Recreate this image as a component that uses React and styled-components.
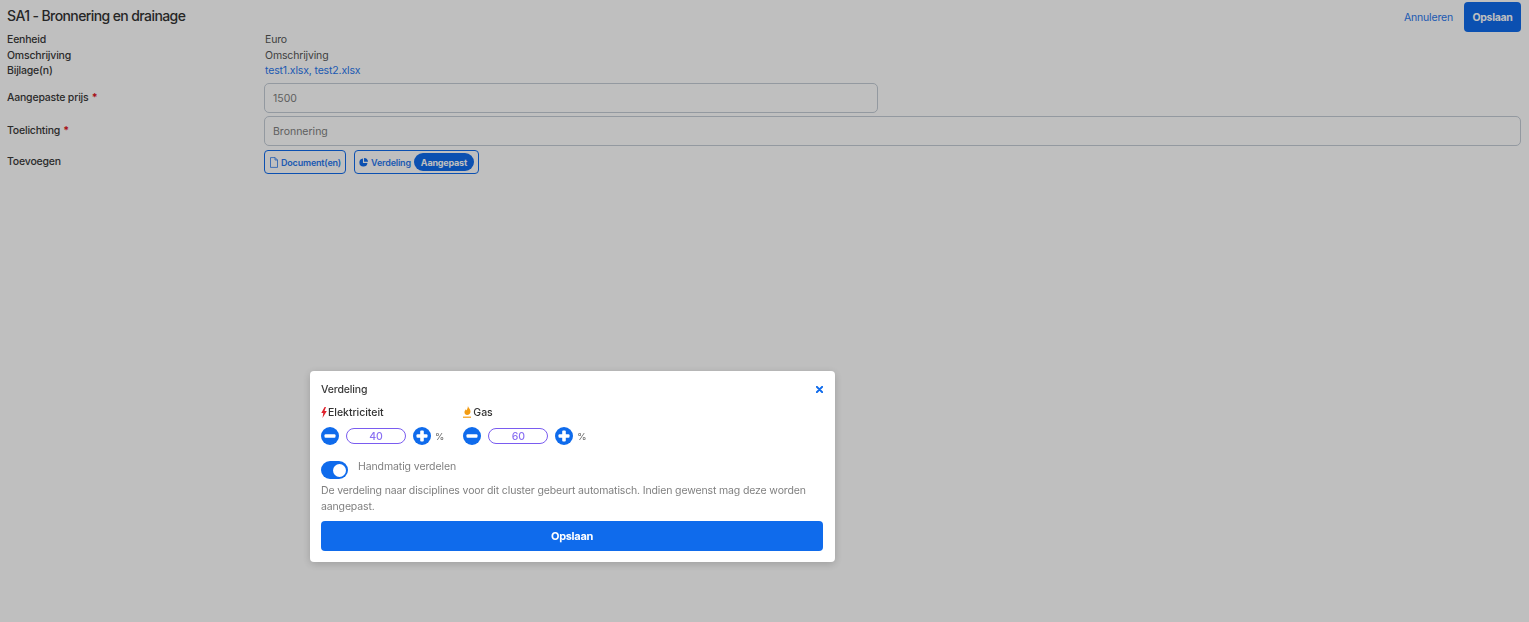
import React from "react";
import styled, { createGlobalStyle } from "styled-components";

const Global = createGlobalStyle`
  html, body { margin: 0; padding: 0; background: #fff; }
  body { font-family: Inter, "Noto Sans", sans-serif; color: #333; overflow: hidden; }
  * { box-sizing: border-box; }
`;

const Page = styled.div`
  width: 1529px;
  height: 622px;
  padding: 2px 8px 0 7px;
`;
const Header = styled.header`
  display: flex;
  align-items: center;
  justify-content: space-between;
  height: 30px;
`;
const Title = styled.h1`
  margin: 0 0 3px;
  font-size: 14px;
  font-weight: 500;
  letter-spacing: -0.6px;
  color: #333;
`;
const HeaderActions = styled.div`
  display: flex;
  align-items: center;
  gap: 11px;
`;
const LinkButton = styled.a`
  font-size: 10.5px;
  letter-spacing: -0.17px;
  color: #2a78ee;
`;
const SmallPrimary = styled.button`
  width: 57px;
  height: 30px;
  border: 0;
  border-radius: 4px;
  background: #0f6bec;
  color: #fff;
  font: 700 10.5px Inter, sans-serif;
  letter-spacing: -0.3px;
  padding: 0;
`;
const InfoList = styled.div`
  display: grid;
  grid-template-columns: 258px 1fr;
  grid-template-rows: 15px 16px 15px;
  align-items: center;
  margin-bottom: 5px;
`;
const InfoLabel = styled.div`
  font-size: 10.5px;
  font-weight: 500;
  letter-spacing: -0.2px;
  color: #3a3a3a;
`;
const InfoValue = styled.div`
  font-size: 10.5px;
  letter-spacing: -0.15px;
  color: ${(p) => (p.$link ? "#2a78ee" : "#555")};
`;
const FormRow = styled.div`
  display: grid;
  grid-template-columns: 257px 1fr;
  margin-bottom: 3px;
`;
const FieldLabel = styled.div`
  font-size: 10.5px;
  font-weight: 500;
  letter-spacing: -0.2px;
  color: #3a3a3a;
  padding-top: ${(p) => p.$top || 8}px;
`;
const Req = styled.span`
  color: #e0141e;
  font-weight: 700;
  margin-left: 1px;
`;
const Field = styled.div`
  height: 30px;
  width: ${(p) => p.$width || "100%"};
  border: 1px solid #c4ccd6;
  border-radius: 5px;
  padding: 1px 8px 0;
  display: flex;
  align-items: center;
  font-size: 10.5px;
  color: #808080;
  background: #fff;
`;
const AddRow = styled.div`
  display: flex;
  gap: 8px;
  padding-top: 1px;
`;
const AddButton = styled.div`
  height: 24px;
  display: flex;
  align-items: center;
  gap: ${(p) => p.$gap}px;
  padding: 0 4px;
  border: 1px solid #0f6bec;
  border-radius: 4px;
  font-size: 9px;
  font-weight: 600;
  letter-spacing: -0.19px;
  color: #2a78ee;
`;
const Pill = styled.span`
  height: 18px;
  padding: 0 7px;
  display: flex;
  align-items: center;
  border-radius: 9px;
  background: #0f6bec;
  color: #fff;
  font-weight: 700;
`;
const Overlay = styled.div`
  position: fixed;
  inset: 0;
  background: rgba(0, 0, 0, 0.25);
`;
const Modal = styled.section`
  position: fixed;
  left: 310px;
  top: 371px;
  width: 525px;
  height: 191px;
  background: #fff;
  border-radius: 4px;
  box-shadow: 0 2px 8px rgba(0, 0, 0, 0.18);
  padding: 12px 12px 11px 11px;
  display: flex;
  flex-direction: column;
`;
const ModalHead = styled.div`
  display: flex;
  align-items: center;
  justify-content: space-between;
  font-size: 10.5px;
  font-weight: 500;
  letter-spacing: -0.15px;
  color: #3a3a3a;
  height: 13px;
`;
const Disciplines = styled.div`
  display: flex;
  gap: 19px;
  margin-top: 9px;
`;
const Discipline = styled.div`
  display: flex;
  flex-direction: column;
  gap: 8px;
`;
const DisciplineName = styled.div`
  display: flex;
  align-items: center;
  gap: 1px;
  height: 14px;
  font-size: 10.5px;
  font-weight: 500;
  letter-spacing: -0.03px;
  color: #333;
`;
const Stepper = styled.div`
  display: flex;
  align-items: center;
  height: 18px;
`;
const RoundBtn = styled.span`
  display: block;
  width: 18px;
  height: 18px;
`;
const Amount = styled.div`
  width: 60px;
  height: 16px;
  margin: 0 7px;
  border: 1px solid #7a5cf0;
  border-radius: 8px;
  display: flex;
  align-items: center;
  justify-content: center;
  font-size: 10.5px;
  font-weight: 500;
  color: #8a70f2;
`;
const Percent = styled.span`
  margin-left: 4px;
  font-size: 9.5px;
  color: #666;
`;
const ToggleRow = styled.div`
  display: flex;
  align-items: flex-start;
  gap: 10px;
  margin-top: 16px;
  height: 18px;
`;
const Toggle = styled.div`
  width: 27px;
  height: 18px;
  border-radius: 9px;
  background: #0f6bec;
  position: relative;
`;
const Knob = styled.span`
  position: absolute;
  right: 2px;
  top: 2.5px;
  width: 13px;
  height: 13px;
  border-radius: 50%;
  background: #fff;
`;
const ToggleLabel = styled.span`
  margin-top: -1px;
  font-size: 10.5px;
  letter-spacing: -0.1px;
  color: #808080;
`;
const Help = styled.p`
  margin: 4px 0 0;
  font-size: 10.5px;
  line-height: 16px;
  letter-spacing: -0.14px;
  color: #808080;
`;
const SaveBtn = styled.button`
  margin-top: 6px;
  height: 30px;
  width: 100%;
  flex: none;
  border: 0;
  border-radius: 4px;
  background: #0f6bec;
  color: #fff;
  font: 700 11px Inter, sans-serif;
  letter-spacing: -0.3px;
`;

const Minus = () => (
  <RoundBtn as="svg" viewBox="0 0 18 18">
    <circle cx="9" cy="9" r="9" fill="#0f6bec" />
    <rect x="3.5" y="7.2" width="11" height="3.6" rx="1" fill="#fff" />
  </RoundBtn>
);
const Plus = () => (
  <RoundBtn as="svg" viewBox="0 0 18 18">
    <circle cx="9" cy="9" r="9" fill="#0f6bec" />
    <rect x="3.5" y="7.2" width="11" height="3.6" rx="1" fill="#fff" />
    <rect x="7.2" y="3.5" width="3.6" height="11" rx="1" fill="#fff" />
  </RoundBtn>
);
const Bolt = () => (
  <svg width="6" height="11" viewBox="0 0 6 11">
    <path d="M3.6 0 .3 6h2L1.5 11 5.8 4H3.5L5 0Z" fill="#e0222c" />
  </svg>
);
const Flame = () => (
  <svg width="9" height="12" viewBox="0 0 9 12">
    <path d="M4.9 0c.4 1.700 2.600 3 2.600 5.600C7.500 7.600 6 9 4.200 9S1.200 7.700 1.500 5.800c.2-1 .9-1.500 1.200-2.500.4.300.6.700.7 1.100C4.300 3.200 5 1.500 4.900 0Z" fill="#f39c12" />
    <rect x="0" y="10.6" width="8" height="1.2" fill="#f39c12" />
  </svg>
);
const DocIcon = () => (
  <svg width="10" height="11" viewBox="0 0 10 11" fill="none" stroke="#2a78ee" strokeWidth="0.8">
    <path d="M1.500.6h4.600L8.500 3v7.400h-7Z" />
    <path d="M6 .6V3h2.500" />
  </svg>
);
const PieIcon = () => (
  <svg width="9" height="9" viewBox="0 0 10 10">
    <path d="M4.400.6a4.500 4.500 0 1 0 5 5H4.400Z" fill="#0f6bec" />
    <path d="M5.600 0v4.300H10A4.500 4.500 0 0 0 5.600 0Z" fill="#0f6bec" />
  </svg>
);
const CloseIcon = () => (
  <svg width="7" height="7" viewBox="0 0 8 8" stroke="#0f6bec" strokeWidth="2.4" strokeLinecap="round">
    <path d="M1 1 7 7M7 1 1 7" />
  </svg>
);

const disciplines = [
  { name: "Elektriciteit", icon: <Bolt />, value: 40 },
  { name: "Gas", icon: <Flame />, value: 60 },
];

export default function App() {
  return (
    <>
      <Global />
      <Page>
        <Header>
          <Title>SA1 - Bronnering en drainage</Title>
          <HeaderActions>
            <LinkButton>Annuleren</LinkButton>
            <SmallPrimary>Opslaan</SmallPrimary>
          </HeaderActions>
        </Header>
        <InfoList>
          <InfoLabel>Eenheid</InfoLabel>
          <InfoValue>Euro</InfoValue>
          <InfoLabel>Omschrijving</InfoLabel>
          <InfoValue>Omschrijving</InfoValue>
          <InfoLabel>Bijlage(n)</InfoLabel>
          <InfoValue $link>test1.xlsx, test2.xlsx</InfoValue>
        </InfoList>
        <FormRow>
          <FieldLabel>Aangepaste prijs<Req> *</Req></FieldLabel>
          <Field $width="614px">1500</Field>
        </FormRow>
        <FormRow>
          <FieldLabel>Toelichting<Req> *</Req></FieldLabel>
          <Field>Bronnering</Field>
        </FormRow>
        <FormRow>
          <FieldLabel $top={6}>Toevoegen</FieldLabel>
          <AddRow>
            <AddButton $gap={2}><DocIcon />Document(en)</AddButton>
            <AddButton $gap={3}><PieIcon />Verdeling<Pill>Aangepast</Pill></AddButton>
          </AddRow>
        </FormRow>
      </Page>
      <Overlay />
      <Modal>
        <ModalHead>Verdeling<CloseIcon /></ModalHead>
        <Disciplines>
          {disciplines.map((d) => (
            <Discipline key={d.name}>
              <DisciplineName>{d.icon}{d.name}</DisciplineName>
              <Stepper>
                <Minus />
                <Amount>{d.value}</Amount>
                <Plus />
                <Percent>%</Percent>
              </Stepper>
            </Discipline>
          ))}
        </Disciplines>
        <ToggleRow>
          <Toggle><Knob /></Toggle>
          <ToggleLabel>Handmatig verdelen</ToggleLabel>
        </ToggleRow>
        <Help>De verdeling naar disciplines voor dit cluster gebeurt automatisch. Indien gewenst mag deze worden aangepast.</Help>
        <SaveBtn>Opslaan</SaveBtn>
      </Modal>
    </>
  );
}
